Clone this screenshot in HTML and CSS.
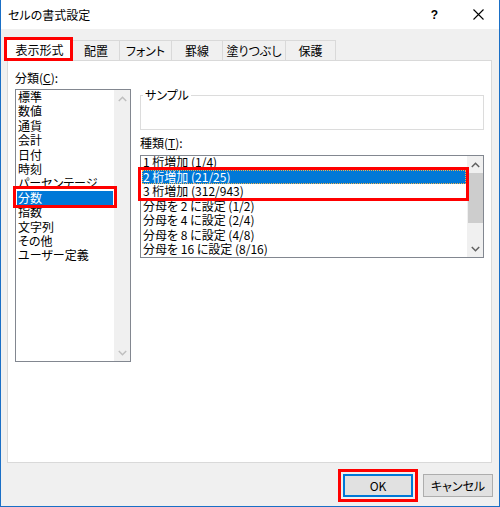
FILE: index.html
```html
<!DOCTYPE html>
<html lang="ja">
<head>
<meta charset="utf-8">
<title>セルの書式設定</title>
<link rel="stylesheet" href="styles.css">
</head>
<body>
<div class="window">
  <div class="titlebar">
    <span class="title">セルの書式設定</span>
    <span class="tb-btns">
      <span class="help">?</span>
      <svg class="close" width="11" height="11" viewBox="0 0 11 11"><path d="M0.5 0.5 L10.5 10.5 M10.5 0.5 L0.5 10.5" stroke="#000" stroke-width="1.1" fill="none"/></svg>
    </span>
  </div>

  <div class="tabs">
    <div class="tab active">表示形式<span class="mark mark-tab"></span></div>
    <div class="tab">配置</div>
    <div class="tab">フォント</div>
    <div class="tab">罫線</div>
    <div class="tab">塗りつぶし</div>
    <div class="tab">保護</div>
  </div>

  <div class="panel">
    <div class="col-left">
      <div class="label">分類(<u>C</u>):</div>
      <div class="listbox cat">
        <div class="items">
          <div class="item">標準</div>
          <div class="item">数値</div>
          <div class="item">通貨</div>
          <div class="item">会計</div>
          <div class="item">日付</div>
          <div class="item">時刻</div>
          <div class="item">パーセンテージ</div>
          <div class="item sel">分数</div>
          <div class="item">指数</div>
          <div class="item">文字列</div>
          <div class="item">その他</div>
          <div class="item">ユーザー定義</div>
        </div>
        <div class="vscroll disabled">
          <div class="arrow"><svg width="9" height="6" viewBox="0 0 9 6"><path d="M0.8 5 L4.5 1.3 L8.2 5" stroke="currentColor" stroke-width="1.5" fill="none"/></svg></div>
          <div class="track"></div>
          <div class="arrow"><svg width="9" height="6" viewBox="0 0 9 6"><path d="M0.8 1 L4.5 4.7 L8.2 1" stroke="currentColor" stroke-width="1.5" fill="none"/></svg></div>
        </div>
        <span class="mark mark-cat"></span>
      </div>
    </div>

    <div class="col-right">
      <fieldset class="sample">
        <legend>サンプル</legend>
        <div class="sample-body"></div>
      </fieldset>
      <div class="label label-type">種類(<u>T</u>):</div>
      <div class="listbox types">
        <div class="items">
          <div class="item first">1 桁増加 (1/4)</div>
          <div class="item sel focus">2 桁増加 (21/25)</div>
          <div class="item">3 桁増加 (312/943)</div>
          <div class="item">分母を 2 に設定 (1/2)</div>
          <div class="item">分母を 4 に設定 (2/4)</div>
          <div class="item">分母を 8 に設定 (4/8)</div>
          <div class="item">分母を 16 に設定 (8/16)</div>
          <div class="item">分母を 10 に設定 (3/10)</div>
          <div class="item">分母を 100 に設定 (30/100)</div>
        </div>
        <div class="vscroll">
          <div class="arrow"><svg width="9" height="6" viewBox="0 0 9 6"><path d="M0.8 5 L4.5 1.3 L8.2 5" stroke="currentColor" stroke-width="1.5" fill="none"/></svg></div>
          <div class="track"><div class="thumb"></div></div>
          <div class="arrow"><svg width="9" height="6" viewBox="0 0 9 6"><path d="M0.8 1 L4.5 4.7 L8.2 1" stroke="currentColor" stroke-width="1.5" fill="none"/></svg></div>
        </div>
        <span class="mark mark-type"></span>
      </div>
    </div>
  </div>

  <div class="buttons">
    <span class="btn-wrap">
      <button class="btn default">OK</button>
      <span class="mark mark-ok"></span>
    </span>
    <span class="btn-wrap">
      <button class="btn">キャンセル</button>
    </span>
  </div>
</div>
</body>
</html>
```

FILE: styles.css
```css
* {
  box-sizing: border-box;
}

body {
  margin: 0;
  font-family: "Noto Sans CJK JP", "Noto Sans", sans-serif;
  font-size: 12px;
  font-feature-settings: "palt";
  color: #000;
  background: #fff;
}

.window {
  width: 500px;
  height: 507px;
  background: #f0f0f0;
  border: 1px solid #1a6fc6;
  border-top: none;
  display: flex;
  flex-direction: column;
}

/* title bar */
.titlebar {
  height: 29px;
  flex: none;
  background: #fff;
  display: flex;
  align-items: center;
  padding-left: 7px;
}

.title {
  line-height: 16px;
}

.tb-btns {
  margin-left: auto;
  margin-right: 15px;
  display: flex;
  align-items: center;
}

.help {
  font-family: "Liberation Sans", sans-serif;
  font-weight: bold;
  font-size: 12px;
  margin-right: 35px;
}

.close {
  display: block;
}

/* tabs */
.tabs {
  flex: none;
  display: flex;
  align-items: flex-end;
  height: 24px;
  margin: 8px 0 -1px 5px;
  position: relative;
  z-index: 1;
}

.tab {
  height: 21px;
  border: 1px solid #d9d9d9;
  border-left: none;
  background: #f0f0f0;
  display: flex;
  align-items: center;
  justify-content: center;
  line-height: 14px;
  white-space: nowrap;
}

.tab:nth-child(1) { width: 67px; }
.tab:nth-child(2) { width: 47px; }
.tab:nth-child(3) { width: 52px; }
.tab:nth-child(4) { width: 51px; }
.tab:nth-child(5) { width: 63px; }
.tab:nth-child(6) { width: 50px; }

.tab.active {
  height: 24px;
  background: #fff;
  border-left: 1px solid #d9d9d9;
  border-bottom: none;
  position: relative;
}

/* panel */
.panel {
  flex: none;
  margin: 0 7px 0 6px;
  height: 403px;
  background: #fff;
  border: 1px solid #d9d9d9;
  display: flex;
  padding: 9px 6px 0 7px;
}

.label {
  line-height: 16px;
  height: 16px;
  white-space: nowrap;
}

.col-left {
  width: 116px;
  flex: none;
}

.col-right {
  width: 344px;
  flex: none;
  margin-left: 9px;
  display: flex;
  flex-direction: column;
}

/* list boxes */
.listbox {
  border: 1px solid #828790;
  background: #fff;
  position: relative;
  display: flex;
}

.listbox .items {
  flex: 1;
  min-width: 0;
  overflow: hidden;
}

.cat {
  margin-top: 3px;
  height: 273px;
}

.cat .item {
  height: 14.4px;
  line-height: 14.4px;
}

.types {
  margin-top: 4px;
  height: 103px;
}

.types .item {
  height: 14.5px;
  line-height: 14.5px;
}

.types .item.first {
  margin-top: -1px;
}

.item {
  margin: 0 1px;
  padding-left: 1px;
  white-space: nowrap;
}

.item.sel {
  background: #0078d7;
  color: #fff;
}

.item.focus {
  outline: 1px dotted #f2b34a;
  outline-offset: -1px;
}

/* scrollbars */
.vscroll {
  width: 16px;
  flex: none;
  background: #f0f0f0;
  display: flex;
  flex-direction: column;
  color: #606060;
}

.vscroll.disabled {
  color: #bfbfbf;
}

.arrow {
  height: 17px;
  flex: none;
  display: flex;
  align-items: center;
  justify-content: center;
}

.arrow svg {
  display: block;
}

.track {
  flex: 1;
}

.thumb {
  height: 50px;
  margin-left: 1px;
  background: #cdcdcd;
}

/* sample group */
.sample {
  margin: 17px 0 0;
  padding: 0;
  border: 1px solid #dcdcdc;
  min-width: 0;
}

.sample legend {
  padding: 0 2px;
  margin-left: 2px;
  line-height: 16px;
}

.sample-body {
  height: 26px;
}

.label-type {
  margin-top: 5px;
}

/* buttons */
.buttons {
  flex: none;
  display: flex;
  justify-content: flex-end;
  gap: 10px;
  margin: 11px 6px 0 0;
}

.btn-wrap {
  position: relative;
  display: block;
}

.btn {
  display: block;
  width: 70px;
  height: 23px;
  padding: 0;
  background: #e1e1e1;
  border: 1px solid #adadad;
  font-family: inherit;
  font-size: 12px;
  font-feature-settings: "palt";
  color: #000;
}

.btn.default {
  border-color: #0078d7;
  box-shadow: inset 0 0 0 1px #0078d7;
}

/* red highlight marks */
.mark {
  position: absolute;
  border: 3px solid #f00;
  pointer-events: none;
}

.mark-tab {
  left: -3px;
  top: -1px;
  width: 69px;
  height: 24px;
}

.mark-cat {
  left: -3px;
  top: 96px;
  width: 104px;
  height: 22px;
}

.mark-type {
  left: -3px;
  top: 11px;
  width: 331px;
  height: 34px;
}

.mark-ok {
  left: -5px;
  top: -5px;
  width: 80px;
  height: 33px;
}
```
